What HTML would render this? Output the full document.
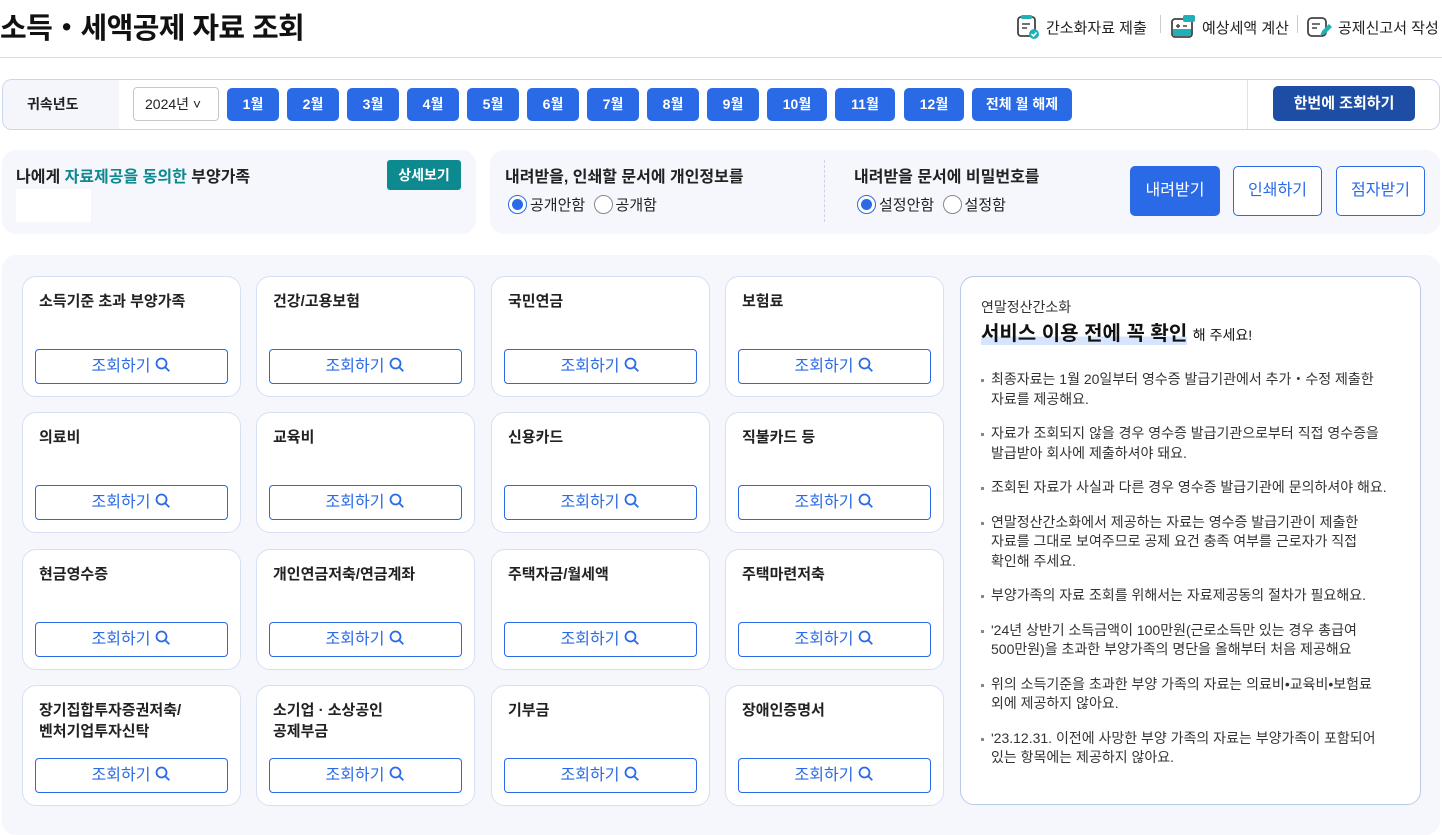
<!DOCTYPE html>
<html><head><meta charset="utf-8"><style>
*{box-sizing:border-box;margin:0;padding:0}
body{width:1442px;height:827px;overflow:hidden;background:#fff;font-family:"Liberation Sans","Noto Sans CJK KR",sans-serif;color:#222;position:relative}
.abs{position:absolute}
h1{position:absolute;left:0;top:5px;font-size:29px;font-weight:700;color:#111;letter-spacing:-0.6px}
.tl{position:absolute;top:14px;font-size:15px;color:#222;display:flex;align-items:center;gap:6px}
.sep{position:absolute;top:15px;width:1px;height:18px;background:#ccc}
.bar{position:absolute;left:2px;top:79px;width:1438px;height:51px;border:1px solid #c9d6ee;border-radius:10px;overflow:hidden}
.bar .lab{position:absolute;left:0;top:0;width:116px;height:49px;background:#f4f6fb;font-size:14px;font-weight:700;line-height:49px;padding-left:24px}
.sel{position:absolute;left:130px;top:7px;width:86px;height:34px;border:1px solid #c8c8c8;border-radius:4px;font-size:14px;line-height:32px;padding-left:11px}
.mb{position:absolute;top:8px;height:33px;background:#2a6ae6;color:#fff;border-radius:5px;font-size:14px;font-weight:700;text-align:center;line-height:33px}
.one{position:absolute;left:1270px;top:6px;width:142px;height:35px;background:#1e4da5;color:#fff;border-radius:5px;font-size:15px;font-weight:700;text-align:center;line-height:35px}
.panel{position:absolute;background:#f5f7fd;border-radius:14px}
.card{position:absolute;width:219px;height:121px;background:#fff;border:1px solid #d6e0f3;border-radius:14px}
.card .t{position:absolute;left:16px;top:14px;font-size:15px;font-weight:700;color:#222;line-height:21px}
.card .b{position:absolute;left:12px;top:72px;width:193px;height:35px;border:1px solid #2a6ae6;border-radius:4px;color:#2a6ae6;font-size:16px;text-align:center;line-height:33px}
.radio{display:inline-block;width:19px;height:19px;border:1px solid #888;border-radius:50%;vertical-align:-4px;margin-right:3px;position:relative;background:#fff}
.radio.on{border-color:#2a6ae6}
.radio.on:after{content:"";position:absolute;left:3px;top:3px;width:11px;height:11px;border-radius:50%;background:#2a6ae6}
.info li{list-style:none;position:relative;padding-left:10px;font-size:14px;line-height:19.5px;color:#333;margin-bottom:15px;word-break:keep-all}
.info li:before{content:"";position:absolute;left:0;top:9px;width:3px;height:3px;background:#888}
</style></head><body>
<h1>소득・세액공제 자료 조회</h1>
<div class="tl" style="left:1016px"><svg width="24" height="26" viewBox="0 0 24 26"><rect x="2" y="3" width="17" height="19" rx="3" fill="none" stroke="#444" stroke-width="1.8"/><rect x="5" y="1" width="11" height="4" rx="1.5" fill="#20b0b8"/><path d="M6 10h8M6 14h5" stroke="#444" stroke-width="1.6"/><circle cx="18" cy="20" r="5" fill="#20b0b8"/><path d="M15.5 20l2 2 3-3.5" stroke="#fff" stroke-width="1.5" fill="none"/></svg>간소화자료 제출</div>
<div class="sep" style="left:1160px"></div>
<div class="tl" style="left:1170px"><svg width="26" height="26" viewBox="0 0 26 26"><rect x="2" y="5" width="20" height="18" rx="3" fill="none" stroke="#444" stroke-width="1.8"/><rect x="3" y="15" width="18" height="7" fill="#20b0b8"/><rect x="13" y="1" width="12" height="7" rx="2" fill="#20b0b8"/><path d="M6 12h4M8 10v4M13 12h4" stroke="#444" stroke-width="1.5"/></svg>예상세액 계산</div>
<div class="sep" style="left:1297px"></div>
<div class="tl" style="left:1306px"><svg width="26" height="26" viewBox="0 0 26 26"><rect x="2" y="4" width="18" height="18" rx="4" fill="none" stroke="#444" stroke-width="1.8"/><path d="M6 10h8M6 14h5" stroke="#444" stroke-width="1.6"/><path d="M14 22l2-5 7-7 3 3-7 7z" fill="#20b0b8"/></svg>공제신고서 작성</div>
<div class="abs" style="left:0;top:57px;width:1442px;height:1px;background:#ddd"></div>

<div class="bar"><div class="lab">귀속년도</div><div class="sel">2024년 ˅</div>
<div class="mb" style="left:224px;width:52px">1월</div><div class="mb" style="left:284px;width:52px">2월</div><div class="mb" style="left:344px;width:52px">3월</div><div class="mb" style="left:404px;width:52px">4월</div><div class="mb" style="left:464px;width:52px">5월</div><div class="mb" style="left:524px;width:52px">6월</div><div class="mb" style="left:584px;width:52px">7월</div><div class="mb" style="left:644px;width:52px">8월</div><div class="mb" style="left:704px;width:52px">9월</div><div class="mb" style="left:764px;width:60px">10월</div><div class="mb" style="left:832px;width:60px">11월</div><div class="mb" style="left:901px;width:60px">12월</div><div class="mb" style="left:969px;width:100px">전체 월 해제</div>
<div class="abs" style="left:1244px;top:0;width:1px;height:49px;background:#dbe3f2"></div>
<div class="one">한번에 조회하기</div></div>

<div class="panel" style="left:2px;top:150px;width:474px;height:84px">
<div class="abs" style="left:14px;top:13px;font-size:16px;font-weight:700">나에게 <span style="color:#0d8a8f">자료제공을 동의한</span> 부양가족</div>
<div class="abs" style="left:385px;top:10px;width:74px;height:30px;background:#0d8a8f;color:#fff;border-radius:3px;font-size:14px;font-weight:700;text-align:center;line-height:30px">상세보기</div>
<div class="abs" style="left:14px;top:39px;width:75px;height:33px;background:#fff"></div></div>

<div class="panel" style="left:490px;top:150px;width:950px;height:84px">
<div class="abs" style="left:15px;top:13px;font-size:16px;font-weight:700">내려받을, 인쇄할 문서에 개인정보를</div>
<div class="abs" style="left:18px;top:44px;font-size:15px"><span class="radio on"></span>공개안함 &nbsp;<span class="radio"></span>공개함</div>
<div class="abs" style="left:334px;top:10px;width:0;height:62px;border-left:1px dashed #c8d3e8"></div>
<div class="abs" style="left:364px;top:13px;font-size:16px;font-weight:700">내려받을 문서에 비밀번호를</div>
<div class="abs" style="left:367px;top:44px;font-size:15px"><span class="radio on"></span>설정안함 &nbsp;<span class="radio"></span>설정함</div>
<div class="abs" style="left:640px;top:16px;width:90px;height:50px;background:#2a6ae6;color:#fff;border-radius:5px;font-size:16px;text-align:center;line-height:50px">내려받기</div>
<div class="abs" style="left:743px;top:16px;width:89px;height:50px;border:1px solid #2a6ae6;color:#2a6ae6;border-radius:5px;font-size:16px;text-align:center;line-height:48px;background:#fff">인쇄하기</div>
<div class="abs" style="left:846px;top:16px;width:89px;height:50px;border:1px solid #2a6ae6;color:#2a6ae6;border-radius:5px;font-size:16px;text-align:center;line-height:48px;background:#fff">점자받기</div></div>

<div class="panel" style="left:2px;top:255px;width:1438px;height:580px"></div>
<div id="cards"></div>
<div class="abs" style="left:960px;top:276px;width:461px;height:529px;background:#fff;border:1px solid #b9c9e6;border-radius:14px">
<div class="abs" style="left:20px;top:20px;font-size:14px;color:#333">연말정산간소화</div>
<div class="abs" style="left:20px;top:40px;font-size:20px;font-weight:700;color:#111"><span style="background:linear-gradient(transparent 62%,#d6e5fb 62%)">서비스 이용 전에 꼭 확인</span> <span style="font-size:14px;font-weight:400">해 주세요!</span></div>
<ul class="info abs" style="left:20px;top:93px;width:418px">
<li>최종자료는 1월 20일부터 영수증 발급기관에서 추가・수정 제출한 자료를 제공해요.</li>
<li>자료가 조회되지 않을 경우 영수증 발급기관으로부터 직접 영수증을 발급받아 회사에 제출하셔야 돼요.</li>
<li>조회된 자료가 사실과 다른 경우 영수증 발급기관에 문의하셔야 해요.</li>
<li>연말정산간소화에서 제공하는 자료는 영수증 발급기관이 제출한 자료를 그대로 보여주므로 공제 요건 충족 여부를 근로자가 직접 확인해 주세요.</li>
<li>부양가족의 자료 조회를 위해서는 자료제공동의 절차가 필요해요.</li>
<li>'24년 상반기 소득금액이 100만원(근로소득만 있는 경우 총급여 500만원)을 초과한 부양가족의 명단을 올해부터 처음 제공해요</li>
<li>위의 소득기준을 초과한 부양 가족의 자료는 의료비•교육비•보험료 외에 제공하지 않아요.</li>
<li>'23.12.31. 이전에 사망한 부양 가족의 자료는 부양가족이 포함되어 있는 항목에는 제공하지 않아요.</li>
</ul></div>
<script>
var n=["소득기준 초과 부양가족","건강/고용보험","국민연금","보험료","의료비","교육비","신용카드","직불카드 등","현금영수증","개인연금저축/연금계좌","주택자금/월세액","주택마련저축","장기집합투자증권저축/<br>벤처기업투자신탁","소기업 · 소상공인<br>공제부금","기부금","장애인증명서"];
var xs=[22,256,491,725],ys=[276,412,549,685],h="";
var q='<svg width="16" height="16" viewBox="0 0 16 16" style="vertical-align:-2px;margin-left:5px"><circle cx="6.5" cy="6.5" r="5" fill="none" stroke="#2a6ae6" stroke-width="1.8"/><path d="M10.3 10.3l4 4" stroke="#2a6ae6" stroke-width="1.8"/></svg>';
for(var i=0;i<16;i++){h+='<div class="card" style="left:'+xs[i%4]+'px;top:'+ys[Math.floor(i/4)]+'px"><div class="t">'+n[i]+'</div><div class="b">조회하기'+q+'</div></div>';}
document.getElementById("cards").innerHTML=h;
</script>
</body></html>
